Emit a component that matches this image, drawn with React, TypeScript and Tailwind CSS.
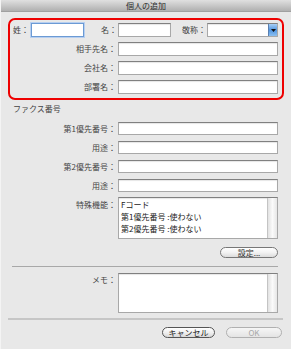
import React from "react";

const inputCls =
  "bg-white border border-[#a8a8a8] border-t-[#808080] shadow-[inset_0_1px_1px_rgba(0,0,0,0.10)]";

function Label({ children, w = "w-[115px]" }: { children: React.ReactNode; w?: string }) {
  return <div className={`${w} shrink-0 text-right whitespace-nowrap`}>{children}</div>;
}

function Scroll() {
  return (
    <div className="absolute right-0 top-0 bottom-0 w-[10px] border-l border-[#c4c4c4] bg-gradient-to-r from-[#e2e2e2] via-[#fafafa] to-[#e6e6e6]" />
  );
}

export default function App() {
  return (
    <div className="w-[291px] h-[349px] bg-[#e8e8e8] flex flex-col text-[8px] leading-none text-[#444] font-['Noto_Sans_CJK_JP','Noto_Sans',sans-serif] border-l border-[#f4f4f4] overflow-hidden">
      {/* Title bar */}
      <div className="h-[12px] shrink-0 bg-gradient-to-b from-[#e0e0e0] to-[#b0b0b0] flex items-center justify-center text-[#2a2a2a] border-b border-[#a0a0a0]">
        個人の追加
      </div>

      {/* Red group */}
      <div className="mt-[6px] ml-[7px] w-[276px] h-[82px] shrink-0 border-2 border-[#ee0000] rounded-[7px] pt-[3px] pr-[4px] flex flex-col gap-[5px]">
        <div className="flex items-center h-[14px]">
          <div className="ml-[3px] w-[16px] whitespace-nowrap">姓：</div>
          <div className="ml-[2px] w-[53px] h-[14px] bg-white border border-[#6b9ad4] shadow-[0_0_0_1px_#b7cff0]" />
          <div className="ml-[17px] w-[16px] whitespace-nowrap">名：</div>
          <div className={`ml-[1px] w-[53px] h-[14px] ${inputCls}`} />
          <div className="ml-[11px] w-[24px] whitespace-nowrap">敬称：</div>
          <div className={`ml-[1px] w-[71px] h-[14px] ${inputCls} relative`}>
            <div className="absolute right-0 top-0 bottom-0 w-[9px] bg-gradient-to-b from-[#a9d0f5] via-[#4f94e0] to-[#8cc0f0] border-l border-[#5a7fb0] flex items-center justify-center">
              <svg width="5" height="3" viewBox="0 0 5 3">
                <path d="M0 0 L5 0 L2.5 3 Z" fill="#111" />
              </svg>
            </div>
          </div>
        </div>
        {["相手先名：", "会社名：", "部署名："].map((t) => (
          <div key={t} className="flex items-center h-[14px]">
            <Label w="w-[106px]">{t}</Label>
            <div className={`ml-[2px] flex-1 h-[14px] ${inputCls}`} />
          </div>
        ))}
      </div>

      {/* Fax */}
      <div className="mt-[5px] pl-[12px] h-[8px] shrink-0">ファクス番号</div>
      <div className="mt-[9px] flex flex-col gap-[6px] shrink-0">
        {["第1優先番号：", "用途：", "第2優先番号：", "用途："].map((t, i) => (
          <div key={i} className="flex items-center h-[13px]">
            <Label>{t}</Label>
            <div className={`ml-[2px] w-[160px] h-[13px] ${inputCls}`} />
          </div>
        ))}
      </div>

      <div className="mt-[5px] flex shrink-0">
        <Label>
          <div className="pt-[4px]">特殊機能：</div>
        </Label>
        <div className={`ml-[2px] w-[160px] h-[42px] ${inputCls} relative text-[#222] pl-[2px] pt-[3px] flex flex-col gap-[4px]`}>
          <div>Fコード</div>
          <div>第1優先番号 :使わない</div>
          <div>第2優先番号 :使わない</div>
          <Scroll />
        </div>
      </div>

      <div className="mt-[8px] flex justify-end pr-[13px] shrink-0">
        <div className="w-[58px] h-[11px] rounded-full border border-[#777] bg-gradient-to-b from-[#ffffff] via-[#f2f2f2] to-[#dcdcdc] flex items-center justify-center text-[#333]">
          設定...
        </div>
      </div>

      <div className="mt-[8px] ml-[11px] w-[266px] h-px bg-[#a8a8a8] shrink-0" />

      <div className="mt-[6px] flex shrink-0">
        <Label>
          <div className="pt-[3px]">メモ：</div>
        </Label>
        <div className={`ml-[2px] w-[160px] h-[40px] ${inputCls} relative`}>
          <Scroll />
        </div>
      </div>

      <div className="mt-[5px] ml-[7px] w-[275px] h-[2px] bg-[#c6c6c6] shrink-0" />

      <div className="mt-[7px] flex shrink-0">
        <div className="ml-[161px] w-[53px] h-[11px] rounded-full border border-[#555] bg-gradient-to-b from-[#ffffff] via-[#f0f0f0] to-[#d8d8d8] flex items-center justify-center text-[#222]">
          キャンセル
        </div>
        <div className="ml-[11px] w-[56px] h-[11px] rounded-full border border-[#b0b0b0] bg-gradient-to-b from-[#f6f6f6] to-[#e4e4e4] flex items-center justify-center text-[#a8a8a8]">
          OK
        </div>
      </div>
    </div>
  );
}
